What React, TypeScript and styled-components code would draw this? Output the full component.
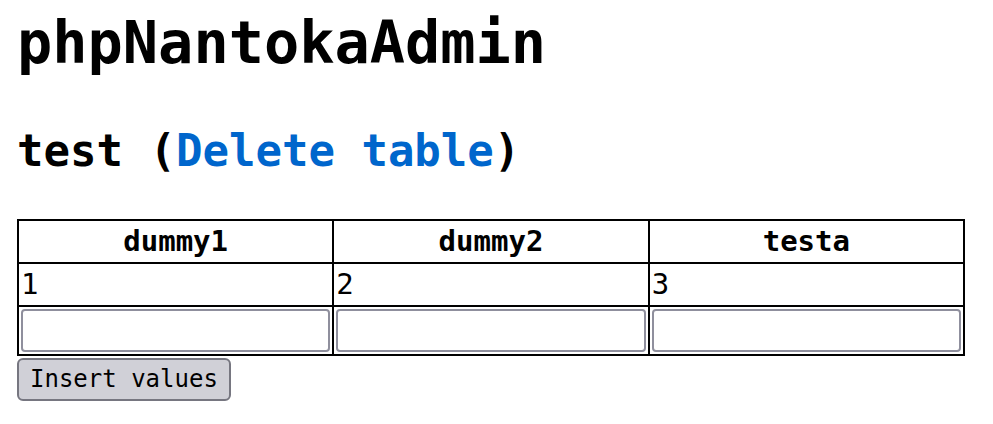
import React from 'react';
import styled, {createGlobalStyle} from 'styled-components';

const GlobalStyle = createGlobalStyle`
  html, body {
    margin: 0;
    padding: 0;
    background: #ffffff;
  }
  body {
    font-family: "DejaVu Sans Mono", "Liberation Mono", monospace;
    color: #000000;
  }
`;

const columns = ['dummy1', 'dummy2', 'testa'];
const rows = [['1', '2', '3']];

export default function App() {
  return (
    <>
      <GlobalStyle />
      <Styled.Page>
        <Styled.Title>phpNantokaAdmin</Styled.Title>
        <Styled.TableName>
          test (<Styled.Link href="#">Delete table</Styled.Link>)
        </Styled.TableName>
        <form onSubmit={event => event.preventDefault()}>
          <Styled.Table>
            <thead>
              <tr>
                {columns.map(name => (
                  <Styled.Head key={name}>{name}</Styled.Head>
                ))}
              </tr>
            </thead>
            <tbody>
              {rows.map((row, i) => (
                <tr key={i}>
                  {row.map((value, j) => (
                    <Styled.Cell key={j}>{value}</Styled.Cell>
                  ))}
                </tr>
              ))}
              <tr>
                {columns.map(name => (
                  <Styled.InputCell key={name}>
                    <Styled.Input type="text" name={name} />
                  </Styled.InputCell>
                ))}
              </tr>
            </tbody>
          </Styled.Table>
          <Styled.Button type="submit">Insert values</Styled.Button>
        </form>
      </Styled.Page>
    </>
  );
}

const Styled = {
  Page: styled.div`
    display: flex;
    flex-direction: column;
    align-items: flex-start;
    padding: 9px 17px 0;
  `,
  Title: styled.h1`
    margin: 0;
    font-size: 58.6px;
    line-height: 68px;
    font-weight: bold;
  `,
  TableName: styled.h2`
    margin: 48px 0 0;
    font-size: 44px;
    line-height: 51px;
    font-weight: bold;
  `,
  Link: styled.a`
    color: #0066cc;
    text-decoration: none;
  `,
  Table: styled.table`
    margin-top: 43px;
    width: 948px;
    border-collapse: collapse;
    border: 2px solid #000000;
    table-layout: fixed;
  `,
  Head: styled.th`
    border: 2px solid #000000;
    padding: 2px;
    font-size: 29px;
    line-height: 37px;
    font-weight: bold;
    text-align: center;
  `,
  Cell: styled.td`
    border: 2px solid #000000;
    padding: 2px;
    font-size: 29px;
    line-height: 37px;
    text-align: left;
  `,
  InputCell: styled.td`
    border: 2px solid #000000;
    padding: 2px;
  `,
  Input: styled.input`
    display: block;
    box-sizing: border-box;
    width: 100%;
    height: 43px;
    margin: 0;
    border: 2px solid #8f8f9d;
    border-radius: 4px;
    background: #ffffff;
    font-family: inherit;
    font-size: 24px;
  `,
  Button: styled.button`
    margin-top: 2px;
    height: 43px;
    padding: 0 11px;
    border: 2px solid #767680;
    border-radius: 6px;
    background: #d0d0d7;
    color: #000000;
    font-family: "DejaVu Sans Mono", "Liberation Mono", monospace;
    font-size: 24px;
    line-height: 37px;
  `,
};
